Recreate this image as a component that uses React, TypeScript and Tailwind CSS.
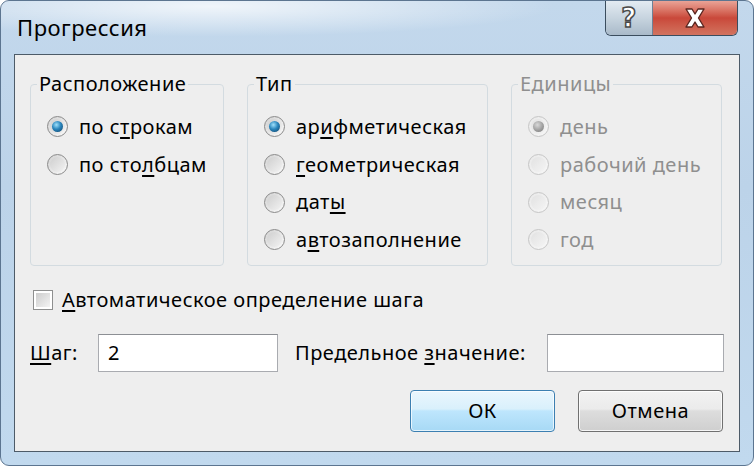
import React from "react";

function Radio({ checked = false, disabled = false }: { checked?: boolean; disabled?: boolean }) {
  return (
    <span
      className={`flex h-[21px] w-[21px] shrink-0 items-center justify-center rounded-full border ${
        disabled
          ? "border-[#c6c6c6] bg-gradient-to-br from-[#e9e9e9] to-[#f7f7f7]"
          : "border-[#8a8a8a] bg-gradient-to-br from-[#d2d2d2] to-[#fbfbfb]"
      }`}
    >
      <span
        className={`flex h-[15px] w-[15px] items-center justify-center rounded-full ${
          disabled ? "bg-gradient-to-br from-[#e2e2e2] to-[#f4f4f4]" : "bg-gradient-to-br from-[#cfcfcf] to-[#f2f2f2]"
        }`}
      >
        {checked && (
          <span
            className={`h-[11px] w-[11px] rounded-full ${
              disabled
                ? "bg-[radial-gradient(circle_at_40%_35%,#d8d8d8_0%,#9a9a9a_60%,#7c7c7c_100%)]"
                : "bg-[radial-gradient(circle_at_40%_35%,#9fe0fb_0%,#2a86bd_45%,#0c3c62_100%)]"
            }`}
          />
        )}
      </span>
    </span>
  );
}

function RadioRow({
  checked,
  disabled,
  children,
}: {
  checked?: boolean;
  disabled?: boolean;
  children: React.ReactNode;
}) {
  return (
    <div className={`flex h-[37.7px] items-center gap-[11px] ${disabled ? "text-[#8f8f8f]" : "text-black"}`}>
      <Radio checked={checked} disabled={disabled} />
      <span>{children}</span>
    </div>
  );
}

function Group({
  title,
  width,
  disabled,
  children,
}: {
  title: string;
  width: string;
  disabled?: boolean;
  children: React.ReactNode;
}) {
  return (
    <fieldset className={`h-[193px] rounded-[4px] border border-[#d3dbe0] ${width}`}>
      <legend className={`ml-[6px] px-[2px] leading-[22px] ${disabled ? "text-[#8f8f8f]" : "text-black"}`}>
        {title}
      </legend>
      <div className="flex flex-col pl-[16px] pt-[13px]">{children}</div>
    </fieldset>
  );
}

function U({ children }: { children: React.ReactNode }) {
  return <span className="underline decoration-[1.5px] underline-offset-[3px]">{children}</span>;
}

export default function App() {
  return (
    <div
      className="flex h-[466px] w-[754px] flex-col overflow-hidden rounded-[9px] border border-[#5c7590] bg-[linear-gradient(180deg,#c3d8ec_0%,#bcd3e9_40%,#c1d9ee_100%)] text-[20px] tracking-[0.5px]"
      style={{ fontFamily: '"Noto Sans", "Open Sans", sans-serif' }}
    >
      {/* title bar */}
      <div className="flex h-[53px] shrink-0 items-start justify-between bg-[radial-gradient(ellipse_at_28%_10%,rgba(255,255,255,0.75)_0%,rgba(255,255,255,0)_45%)]">
        <div className="pl-[16px] pt-[11px] text-[22px] leading-[30px] text-black">Прогрессия</div>
        <div className="mr-[15px] flex h-[35px] overflow-hidden rounded-b-[6px] border border-t-0 border-[#3b4d5e]">
          <div className="flex w-[47px] items-center justify-center border-r border-[#6e8296] bg-gradient-to-b from-[#e3ebf2] via-[#c7d4df] to-[#a9bac9]">
            <span
              className="text-[26px] font-bold leading-none text-white [-webkit-text-stroke:1.5px_#4a4a4a]"
              style={{ fontFamily: '"DejaVu Sans", sans-serif' }}
            >
              ?
            </span>
          </div>
          <div className="flex w-[84px] items-center justify-center bg-gradient-to-b from-[#e9a397] via-[#c9483a] to-[#d2735f]">
            <svg width="24" height="22" viewBox="0 0 24 22">
              <path
                d="M3 2 L9 2 L12 7 L15 2 L21 2 L15.5 11 L21 20 L15 20 L12 15 L9 20 L3 20 L8.5 11 Z"
                fill="#ffffff"
                stroke="#5a2620"
                strokeWidth="1.4"
                strokeLinejoin="round"
              />
            </svg>
          </div>
        </div>
      </div>

      {/* client area */}
      <div className="mx-[13px] mb-[13px] flex flex-1 flex-col border border-[#4d5b68] bg-[#eeeeee] pb-[19px] pl-[15px] pr-[15px] text-black">
        <div className="mt-[18px] flex gap-[23px]">
          <Group title="Расположение" width="w-[194px]">
            <RadioRow checked>
              по с<U>т</U>рокам
            </RadioRow>
            <RadioRow>
              по сто<U>л</U>бцам
            </RadioRow>
          </Group>
          <Group title="Тип" width="w-[241px]">
            <RadioRow checked>
              ар<U>и</U>фметическая
            </RadioRow>
            <RadioRow>
              <U>г</U>еометрическая
            </RadioRow>
            <RadioRow>
              дат<U>ы</U>
            </RadioRow>
            <RadioRow>
              а<U>в</U>тозаполнение
            </RadioRow>
          </Group>
          <Group title="Единицы" width="w-[211px]" disabled>
            <RadioRow checked disabled>
              день
            </RadioRow>
            <RadioRow disabled>рабочий день</RadioRow>
            <RadioRow disabled>месяц</RadioRow>
            <RadioRow disabled>год</RadioRow>
          </Group>
        </div>

        <div className="mt-[24px] flex h-[20px] items-center gap-[9px] pl-[3px]">
          <span className="flex h-[20px] w-[20px] items-center justify-center border border-[#8e8f8f] bg-white">
            <span className="h-[14px] w-[14px] bg-gradient-to-br from-[#cdcdcd] to-[#f4f4f4]" />
          </span>
          <span>
            <U>А</U>втоматическое определение шага
          </span>
        </div>

        <div className="mt-[24px] flex h-[38px] items-center">
          <span className="w-[68px] pl-[0px]">
            <U>Ш</U>аг:
          </span>
          <div className="flex h-[38px] w-[180px] items-center border border-[#a9abb0] border-t-[#8c8f94] bg-white pl-[9px]">
            2
          </div>
          <span className="ml-[17px] flex-1">
            Предельное <U>з</U>начение:
          </span>
          <div className="h-[38px] w-[177px] border border-[#a9abb0] border-t-[#8c8f94] bg-white" />
        </div>

        <div className="mt-[18px] flex justify-end gap-[23px] pr-[1px]">
          <button className="flex h-[42px] w-[145px] items-center justify-center rounded-[4px] border border-[#3c7fb1] bg-[linear-gradient(180deg,#eaf6fd_0%,#d9f0fc_45%,#bee6fd_50%,#a7d9f5_100%)] tracking-[0.5px] shadow-[inset_0_0_0_1px_rgba(255,255,255,0.7)]">
            ОК
          </button>
          <button className="flex h-[42px] w-[145px] items-center justify-center rounded-[4px] border border-[#707070] bg-[linear-gradient(180deg,#f2f2f2_0%,#ebebeb_45%,#dddddd_50%,#cfcfcf_100%)] tracking-[0.5px] shadow-[inset_0_0_0_1px_rgba(255,255,255,0.8)]">
            Отмена
          </button>
        </div>
      </div>
    </div>
  );
}
